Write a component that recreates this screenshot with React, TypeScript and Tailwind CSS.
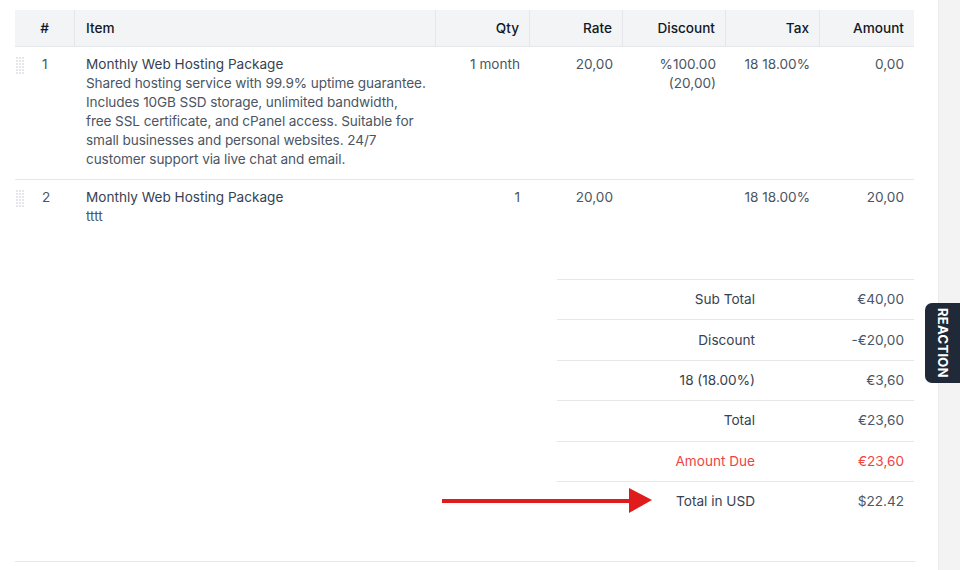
import React from "react";

const cols = "grid grid-cols-[60px_361px_94px_93px_103px_94px_94px]";

function Handle() {
  const dots: React.ReactNode[] = [];
  for (let r = 0; r < 6; r++) {
    for (let c = 0; c < 3; c++) {
      dots.push(<circle key={`${r}-${c}`} cx={1 + c * 3} cy={1 + r * 3} r={0.7} fill="#b8bcc4" />);
    }
  }
  return (
    <svg width="8" height="17" viewBox="0 0 8 17" className="block">
      {dots}
    </svg>
  );
}

const totals = [
  { label: "Sub Total", value: "€40,00" },
  { label: "Discount", value: "-€20,00" },
  { label: "18 (18.00%)", value: "€3,60" },
  { label: "Total", value: "€23,60" },
  { label: "Amount Due", value: "€23,60", red: true },
  { label: "Total in USD", value: "$22.42" },
];

export default function App() {
  return (
    <div
      className="relative flex h-[570px] w-[960px] overflow-hidden bg-white text-[13.6px] leading-[19px] text-[#4b5563]"
      style={{ fontFamily: "Inter, 'Noto Sans', sans-serif" }}
    >
      <div className="w-[938px] bg-white pl-[15px] pt-[10px]">
        <div className="w-[899px]">
          {/* Header */}
          <div className={`${cols} h-[37px] border-b border-[#e5e7eb] bg-[#f3f4f6] font-medium text-[#111827]`}>
            <div className="flex items-center justify-center border-r border-[#e5e7eb]">#</div>
            <div className="flex items-center border-r border-[#e5e7eb] px-[11px]">Item</div>
            <div className="flex items-center justify-end border-r border-[#e5e7eb] px-[10px]">Qty</div>
            <div className="flex items-center justify-end border-r border-[#e5e7eb] px-[10px]">Rate</div>
            <div className="flex items-center justify-end border-r border-[#e5e7eb] px-[10px]">Discount</div>
            <div className="flex items-center justify-end border-r border-[#e5e7eb] px-[10px]">Tax</div>
            <div className="flex items-center justify-end px-[10px]">Amount</div>
          </div>

          {/* Row 1 */}
          <div className={`${cols} border-b border-[#e5e7eb] pb-[10px] pt-[8px]`}>
            <div className="flex items-start">
              <div className="ml-[1px] mt-[2px]">
                <Handle />
              </div>
              <span className="ml-[18px]">1</span>
            </div>
            <div className="whitespace-nowrap px-[11px]">
              <div className="text-[#374151]">Monthly Web Hosting Package</div>
              <div className="tracking-[-0.1px]">Shared hosting service with 99.9% uptime guarantee.</div>
              <div className="tracking-[-0.1px]">Includes 10GB SSD storage, unlimited bandwidth,</div>
              <div className="tracking-[-0.1px]">free SSL certificate, and cPanel access. Suitable for</div>
              <div className="tracking-[-0.1px]">small businesses and personal websites. 24/7</div>
              <div className="tracking-[-0.1px]">customer support via live chat and email.</div>
            </div>
            <div className="px-[10px] text-right">1 month</div>
            <div className="px-[10px] text-right">20,00</div>
            <div className="px-[10px] text-right">
              <div>%100.00</div>
              <div>(20,00)</div>
            </div>
            <div className="px-[10px] text-right">18 18.00%</div>
            <div className="px-[10px] text-right">0,00</div>
          </div>

          {/* Row 2 */}
          <div className={`${cols} pb-[10px] pt-[8px]`}>
            <div className="flex items-start">
              <div className="ml-[1px] mt-[2px]">
                <Handle />
              </div>
              <span className="ml-[18px]">2</span>
            </div>
            <div className="whitespace-nowrap px-[11px]">
              <div className="text-[#374151]">Monthly Web Hosting Package</div>
              <div>tttt</div>
            </div>
            <div className="px-[10px] text-right">1</div>
            <div className="px-[10px] text-right">20,00</div>
            <div className="px-[10px] text-right"></div>
            <div className="px-[10px] text-right">18 18.00%</div>
            <div className="px-[10px] text-right">20,00</div>
          </div>

          {/* Totals */}
          <div className="mt-[43px] flex justify-end">
            <div className="w-[357px]">
              {totals.map((t) => (
                <div
                  key={t.label}
                  className="grid h-[40.4px] grid-cols-[208px_149px] items-center border-t border-[#e5e7eb]"
                >
                  <div className={`pr-[10px] text-right ${t.red ? "text-[#ef4444]" : "text-[#374151]"}`}>{t.label}</div>
                  <div className={`pr-[10px] text-right ${t.red ? "text-[#ef4444]" : "text-[#4b5563]"}`}>{t.value}</div>
                </div>
              ))}
            </div>
          </div>

          <div className="mt-[40px] h-px w-[900px] bg-[#e5e7eb]" />
        </div>
      </div>
      <div className="flex-1 border-l border-[#ebebeb] bg-[#f3f3f4]" />

      {/* Annotation arrow */}
      <svg className="absolute left-[440px] top-[487px]" width="216" height="28" viewBox="0 0 216 28">
        <line x1="2" y1="14" x2="192" y2="14" stroke="#e01b1b" strokeWidth="4" />
        <polygon points="189,1 212,13 189,26" fill="#e01b1b" />
      </svg>

      {/* Reaction tab */}
      <div className="absolute left-[925px] top-[303px] flex h-[80px] w-[35px] items-center justify-center rounded-l-[7px] bg-[#1f2937]">
        <span
          className="text-[13px] font-bold leading-none tracking-[0.3px] text-white"
          style={{ writingMode: "vertical-rl" }}
        >
          REACTION
        </span>
      </div>
    </div>
  );
}
